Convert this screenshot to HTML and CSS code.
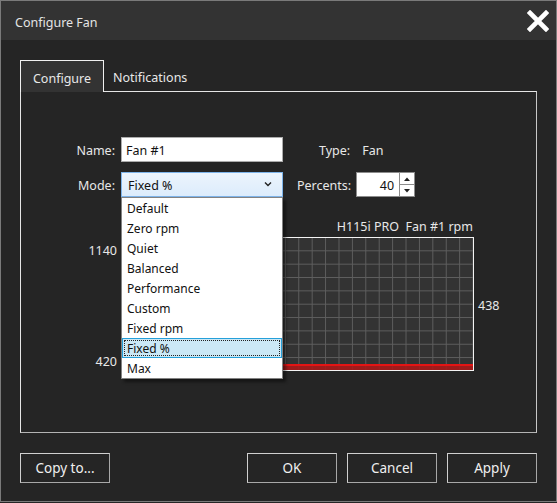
FILE: index.html
```html
<!DOCTYPE html>
<html lang="en">
<head>
  <meta charset="UTF-8">
  <title>Configure Fan</title>
  <link rel="stylesheet" href="styles.css">
</head>
<body>
  <div class="window">
    <div class="titlebar">
      <span class="title">Configure Fan</span>
      <svg class="close" width="22" height="22" viewBox="0 0 22 22">
        <path d="M3 3 L19 19 M19 3 L3 19" stroke="#fff" stroke-width="4.6" stroke-linecap="square"/>
      </svg>
    </div>

    <div class="main">
      <div class="tabs">
        <div class="tab active">Configure</div>
        <div class="tab">Notifications</div>
      </div>

      <div class="panel">
        <div class="row">
          <span class="label">Name:</span>
          <div class="textbox">Fan #1</div>
          <span class="type-label">Type:</span>
          <span class="type-value">Fan</span>
        </div>

        <div class="row">
          <span class="label">Mode:</span>
          <div class="combo-wrap">
            <div class="combo">
              <span>Fixed %</span>
              <svg width="8" height="6" viewBox="0 0 8 6"><path d="M1 1.5 L4 4.5 L7 1.5" stroke="#222" stroke-width="1.4" fill="none"/></svg>
            </div>
            <ul class="dropdown">
              <li>Default</li>
              <li>Zero rpm</li>
              <li>Quiet</li>
              <li>Balanced</li>
              <li>Performance</li>
              <li>Custom</li>
              <li>Fixed rpm</li>
              <li class="selected"><span>Fixed %</span></li>
              <li>Max</li>
            </ul>
          </div>
          <span class="percent-label">Percents:</span>
          <div class="spinbox">
            <span class="spin-value">40</span>
            <div class="spin-buttons">
              <div class="spin-btn"><svg width="6" height="4" viewBox="0 0 6 4"><path d="M0 4 L3 0.5 L6 4Z" fill="#222"/></svg></div>
              <div class="spin-btn"><svg width="6" height="4" viewBox="0 0 6 4"><path d="M0 0 L3 3.5 L6 0Z" fill="#222"/></svg></div>
            </div>
          </div>
        </div>

        <div class="chart-row">
          <div class="axis">
            <span>1140</span>
            <span>420</span>
          </div>
          <div class="chart-col">
            <div class="chart-title">H115i PRO&nbsp; Fan #1 rpm</div>
            <div class="chart">
              <div class="chart-fill"></div>
            </div>
          </div>
          <div class="current">438</div>
        </div>
      </div>

      <div class="buttons">
        <button class="btn">Copy to...</button>
        <div class="spacer"></div>
        <button class="btn">OK</button>
        <button class="btn">Cancel</button>
        <button class="btn">Apply</button>
      </div>
    </div>
  </div>
</body>
</html>
```

FILE: styles.css
```css
*{
  box-sizing: border-box;
}

body{
  margin: 0;
  background-color: #252525;
  font-family: "Noto Sans", "Open Sans", sans-serif;
  color: #e8e8e8;
}

.window{
  width: 557px;
  height: 502px;
  border: 1px solid #7a7a7a;
  background-color: #252525;
  display: flex;
  flex-direction: column;
}

.titlebar{
  height: 39px;
  background-color: #333333;
  display: flex;
  align-items: center;
  justify-content: space-between;
  padding: 0 7px 0 14px;
}
.title{
  font-size: 12.5px;
  color: #e4e4e4;
  padding-top: 3px;
}
.close{
  display: block;
}

.main{
  padding: 20px 19px 0 19px;
  display: flex;
  flex-direction: column;
}

.tabs{
  display: flex;
  height: 31px;
  align-items: stretch;
}
.tab{
  font-size: 12.5px;
  padding: 3px 9px 0 9px;
  display: flex;
  align-items: center;
  color: #e8e8e8;
}
.tab.active{
  width: 84px;
  justify-content: center;
  background-color: #333333;
  border: 1px solid #f0f0f0;
  border-bottom: none;
  height: 32px;
  position: relative;
  z-index: 1;
  padding-top: 3px;
}

.panel{
  height: 342px;
  border: 1px solid #e6e6e6;
  border-right-color: #c8c8c8;
  border-bottom-color: #b4b4b4;
  padding-top: 45px;
  display: flex;
  flex-direction: column;
  gap: 10px;
}

.row{
  display: flex;
  align-items: center;
  height: 25px;
  font-size: 12.5px;
}
.row > span{
  padding-top: 1px;
}
.label{
  width: 94px;
  text-align: right;
  margin-right: 6px;
}

.textbox{
  width: 162px;
  height: 25px;
  background-color: #fff;
  border: 1px solid #acacac;
  color: #111;
  padding: 1px 4px 0 4px;
  display: flex;
  align-items: center;
}
.type-label{
  margin-left: 36px;
}
.type-value{
  margin-left: 12px;
}

.combo-wrap{
  position: relative;
  width: 162px;
  height: 25px;
}
.combo{
  height: 25px;
  border: 1px solid #7eb4ea;
  background: linear-gradient(#ecf4fc, #dcecfc);
  color: #111;
  display: flex;
  align-items: center;
  justify-content: space-between;
  padding: 1px 10px 0 6px;
}
.combo svg{
  display: block;
  margin-top: -2px;
}

.dropdown{
  position: absolute;
  top: 25px;
  left: 0;
  width: 162px;
  margin: 0;
  padding: 0;
  list-style: none;
  background-color: #fff;
  border: 1px solid #828282;
  box-shadow: 3px 3px 3px rgba(0, 0, 0, 0.45);
  z-index: 5;
  font-size: 12px;
  color: #111;
}
.dropdown li{
  height: 20px;
  line-height: 18px;
  padding: 2px 0 0 5px;
}
.dropdown li.selected{
  background-color: #cbe8f6;
  border: 1px solid #26a0da;
  padding: 1px;
  line-height: 16px;
}
.dropdown li.selected span{
  display: block;
  height: 16px;
  border: 1px dotted #222;
  padding: 1px 0 0 2px;
  line-height: 14px;
}

.percent-label{
  margin-left: 14px;
  margin-right: 5px;
}
.spinbox{
  width: 59px;
  height: 25px;
  background-color: #fff;
  border: 1px solid #8c8c8c;
  display: flex;
  color: #111;
}
.spin-value{
  flex: 1;
  text-align: right;
  padding: 1px 5px 0 0;
  line-height: 23px;
}
.spin-buttons{
  width: 15px;
  border-left: 1px solid #8c8c8c;
  display: flex;
  flex-direction: column;
}
.spin-btn{
  flex: 1;
  display: flex;
  align-items: center;
  justify-content: center;
}
.spin-btn + .spin-btn{
  border-top: 1px solid #8c8c8c;
}
.spin-btn svg{
  display: block;
}

.chart-row{
  display: flex;
  align-items: flex-end;
  margin-top: 11px;
  font-size: 12.5px;
}
.axis{
  width: 96px;
  height: 134px;
  margin-right: 7px;
  display: flex;
  flex-direction: column;
  justify-content: space-between;
  align-items: flex-end;
  padding: 6px 0 1px 0;
  line-height: 16px;
}
.chart-col{
  width: 350px;
}
.chart-title{
  text-align: right;
  padding: 1px 1px 0 0;
  line-height: 16px;
  margin-bottom: 2px;
}
.chart{
  height: 134px;
  border: 1px solid #f4f4f4;
  background-color: #333333;
  background-image:
    linear-gradient(to right, #5e5e5e 1px, transparent 1px),
    linear-gradient(to bottom, #5e5e5e 1px, transparent 1px);
  background-size: 13.42px 13.35px;
  background-position: -1px -1px;
  display: flex;
  flex-direction: column;
  justify-content: flex-end;
}
.chart-fill{
  height: 6px;
  border-top: 2px solid #e41414;
  background-color: rgba(170, 24, 24, 0.9);
}
.current{
  height: 134px;
  display: flex;
  align-items: center;
  margin-left: 4px;
  padding-top: 2px;
}

.buttons{
  display: flex;
  gap: 10px;
  margin-top: 20px;
}
.spacer{
  flex: 1;
}
.btn{
  width: 90px;
  height: 30px;
  background-color: #252525;
  border: 1px solid #d0d0d0;
  border-right-color: #a8a8a8;
  border-bottom-color: #a8a8a8;
  color: #f0f0f0;
  font-family: "Noto Sans", "Open Sans", sans-serif;
  font-size: 13.5px;
  padding: 0;
}
```
